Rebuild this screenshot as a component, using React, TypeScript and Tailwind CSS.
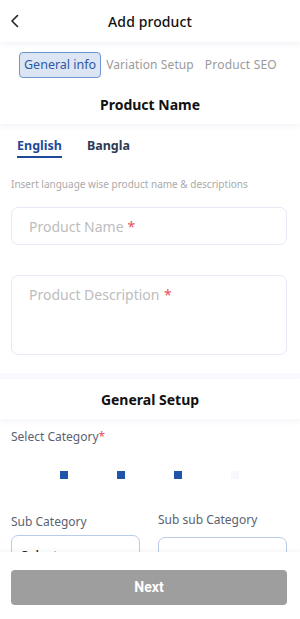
import React from "react";

export default function App() {
  const font = { fontFamily: '"Noto Sans", "Open Sans", sans-serif' };
  return (
    <div className="w-[300px] h-[619px] bg-white relative overflow-hidden" style={font}>
      <div className="h-[42px] flex items-center relative bg-white shadow-[0_3px_5px_rgba(30,60,120,0.05)] z-10">
        <svg className="absolute left-[9px] top-[14px]" width="12" height="14" viewBox="0 0 12 14" fill="none">
          <path d="M8.5 1.5 L3 7 L8.5 12.5" stroke="#222" strokeWidth="1.6" strokeLinecap="round" strokeLinejoin="round" />
        </svg>
        <div className="w-full text-center text-[14px] font-medium text-[#111] tracking-[0.1px]">Add product</div>
      </div>
      <div className="pt-[10px] pb-[6px] flex items-center pl-[19px] gap-[5px]">
        <div className="h-[26px] px-[4px] flex items-center rounded-[4px] bg-[#dce5f4] border border-[#6f94d2] text-[12.5px] text-[#2b5aa6]">General info</div>
        <div className="text-[12px] text-[#9a9a9a] tracking-[0.1px]">Variation Setup</div>
        <div className="text-[12px] text-[#9a9a9a] ml-[6px] tracking-[0.2px]">Product SEO</div>
      </div>
      <div className="h-[40px] flex items-center justify-center text-[14px] font-bold text-[#111] shadow-[0_3px_5px_rgba(30,60,120,0.05)]">Product Name</div>
      <div className="pl-[11px] pr-[13px]">
        <div className="flex gap-[25px] pl-[6px] pt-[13px]">
          <div className="flex flex-col items-center">
            <span className="text-[12.5px] font-bold text-[#1e4a9a] leading-[18px]">English</span>
            <span className="h-[2px] w-full bg-[#1e4a9a] mt-[1px]"></span>
          </div>
          <span className="text-[12.5px] font-bold text-[#2c3b55] leading-[18px]">Bangla</span>
        </div>
        <div className="mt-[19px] text-[10px] text-[#aaaaaa]">Insert language wise product name &amp; descriptions</div>
        <div className="mt-[15px] h-[38px] rounded-[7px] border border-[#e6eaf4] flex items-center pl-[17px] text-[14px] text-[#bdbdbd]">
          Product Name <span className="text-[#e8505b] ml-[4px]">*</span>
        </div>
        <div className="mt-[30px] h-[80px] rounded-[7px] border border-[#e6eaf4] pl-[17px] pt-[8px] text-[14px] text-[#bdbdbd]">
          Product Description <span className="text-[#e8505b] ml-[1px]">*</span>
        </div>
      </div>
      <div className="mt-[18px] h-[6px] bg-[#f8f9fd]"></div>
      <div className="h-[40px] flex items-center justify-center text-[14px] font-bold text-[#111] shadow-[0_3px_5px_rgba(30,60,120,0.05)]">General Setup</div>
      <div className="pl-[11px] pr-[13px]">
        <div className="mt-[9px] text-[12px] text-[#5a6272]">Select Category<span className="text-[#e8505b]">*</span></div>
        <div className="mt-[25px] flex pl-[49px] gap-[49px]">
          <div className="w-[8px] h-[8px] bg-[#1f55a8]"></div>
          <div className="w-[8px] h-[8px] bg-[#1f55a8]"></div>
          <div className="w-[8px] h-[8px] bg-[#1f55a8]"></div>
          <div className="w-[8px] h-[8px] bg-[#f6f8fc]"></div>
        </div>
        <div className="mt-[32px] grid grid-cols-[129px_129px] gap-[18px]">
          <div>
            <div className="text-[12px] text-[#5a6272] mt-[2px]">Sub Category</div>
            <div className="mt-[4px] h-[40px] rounded-[7px] border border-[#b9cbe8] pl-[9px] pt-[10px] text-[13px] font-medium text-[#222]">Select</div>
          </div>
          <div>
            <div className="text-[12px] text-[#5a6272]">Sub sub Category</div>
            <div className="mt-[8px] h-[40px] rounded-[7px] border border-[#b9cbe8] pl-[9px] pt-[10px] text-[13px] font-medium text-[#222]">Select</div>
          </div>
        </div>
      </div>
      <div className="absolute left-0 right-0 bottom-0 h-[67px] bg-white shadow-[0_-2px_4px_rgba(0,0,0,0.04)] pl-[11px] pr-[13px] pt-[18px]">
        <div className="h-[35px] rounded-[4px] bg-[#9e9e9e] flex items-center justify-center text-white text-[14px] font-bold" style={{ fontFamily: 'Roboto, "Noto Sans", sans-serif' }}>Next</div>
      </div>
    </div>
  );
}
